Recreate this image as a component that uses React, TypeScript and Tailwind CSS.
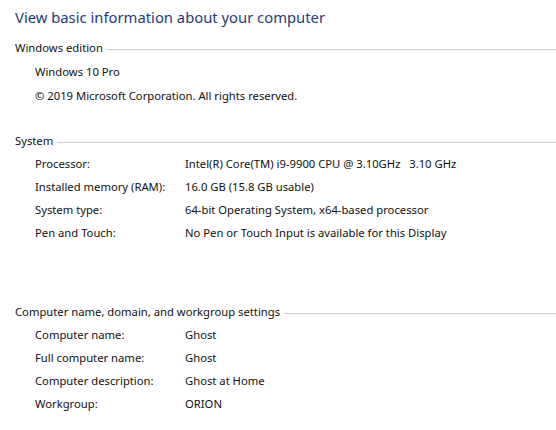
const font = { fontFamily: '"Noto Sans", "Open Sans", sans-serif' }

type Row = [string, string]

const systemRows: Row[] = [
  ['Processor:', 'Intel(R) Core(TM) i9-9900 CPU @ 3.10GHz   3.10 GHz'],
  ['Installed memory (RAM):', '16.0 GB (15.8 GB usable)'],
  ['System type:', '64-bit Operating System, x64-based processor'],
  ['Pen and Touch:', 'No Pen or Touch Input is available for this Display'],
]

const nameRows: Row[] = [
  ['Computer name:', 'Ghost'],
  ['Full computer name:', 'Ghost'],
  ['Computer description:', 'Ghost at Home'],
  ['Workgroup:', 'ORION'],
]

function SectionHeader({ title, className = '' }: { title: string; className?: string }) {
  return (
    <div className={`flex items-center h-[24px] pl-[15px] ${className}`}>
      <span className="whitespace-nowrap">{title}</span>
      <div className="flex-1 h-px bg-[#cfcfcf] ml-[4px] mt-[2px]" />
    </div>
  )
}

function InfoRows({ rows }: { rows: Row[] }) {
  return (
    <div className="flex flex-col">
      {rows.map(([label, value]) => (
        <div key={label} className="flex items-center h-[23px] pl-[35px]">
          <span className="w-[150px] shrink-0">{label}</span>
          <span className="whitespace-pre">{value}</span>
        </div>
      ))}
    </div>
  )
}

export default function App() {
  return (
    <div
      className="w-[556px] h-[430px] bg-white text-[#111111] text-[11.25px] overflow-hidden pt-[5px]"
      style={font}
    >
      <h1 className="h-[24px] leading-[24px] pl-[15px] text-[14.8px] text-[#1f3c76]">
        View basic information about your computer
      </h1>

      <SectionHeader title="Windows edition" className="mt-[7px]" />
      <div className="flex flex-col pl-[35px]">
        <div className="h-[24px] flex items-center">Windows 10 Pro</div>
        <div className="h-[24px] flex items-center">© 2019 Microsoft Corporation. All rights reserved.</div>
      </div>

      <SectionHeader title="System" className="mt-[21px]" />
      <InfoRows rows={systemRows} />

      <SectionHeader title="Computer name, domain, and workgroup settings" className="mt-[55px]" />
      <InfoRows rows={nameRows} />
    </div>
  )
}
